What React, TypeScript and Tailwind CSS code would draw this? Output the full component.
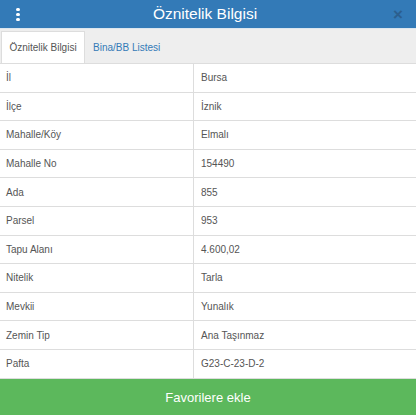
const rows: [string, string][] = [
  ["İl", "Bursa"],
  ["İlçe", "İznik"],
  ["Mahalle/Köy", "Elmalı"],
  ["Mahalle No", "154490"],
  ["Ada", "855"],
  ["Parsel", "953"],
  ["Tapu Alanı", "4.600,02"],
  ["Nitelik", "Tarla"],
  ["Mevkii", "Yunalık"],
  ["Zemin Tip", "Ana Taşınmaz"],
  ["Pafta", "G23-C-23-D-2"],
];

export default function App() {
  return (
    <div className="flex h-[415px] w-[416px] flex-col overflow-hidden bg-white font-['Liberation_Sans',Arial,sans-serif] text-[#333]">
      <header className="flex h-[28px] shrink-0 items-center bg-[#337ab7] text-white">
        <div className="flex w-[36px] flex-col items-center gap-[1.5px] pt-[1px]">
          <span className="h-[3.5px] w-[3.5px] rounded-full bg-white" />
          <span className="h-[3.5px] w-[3.5px] rounded-full bg-white" />
          <span className="h-[3.5px] w-[3.5px] rounded-full bg-white" />
        </div>
        <h1 className="flex-1 pr-[6px] text-center text-[15.5px] leading-none">Öznitelik Bilgisi</h1>
        <span className="w-[36px] text-center text-[17px] font-bold leading-none text-[#2c5f8e]">×</span>
      </header>

      <div className="flex h-[35px] shrink-0 items-end border-t border-[#dbe6ef] bg-[#eeeeee] pl-[1px]">
        <div className="flex h-[32px] w-[84px] items-center justify-center border-x border-t border-[#dddddd] bg-white text-[10px] text-[#555]">
          Öznitelik Bilgisi
        </div>
        <div className="flex h-[32px] items-center px-[8px] text-[10px] text-[#337ab7]">Bina/BB Listesi</div>
      </div>

      <div className="flex-1 border-t border-[#dddddd]">
        {rows.map(([label, value]) => (
          <div key={label} className="grid h-[28.6px] grid-cols-[194px_1fr] border-b border-[#dddddd] text-[10px] text-[#555]">
            <div className="flex items-center border-r border-[#dddddd] pl-[6px]">{label}</div>
            <div className="flex items-center pl-[7px]">{value}</div>
          </div>
        ))}
      </div>

      <button
        type="button"
        className="h-[38px] shrink-0 bg-[#5cb85c] text-center text-[13px] text-white"
      >
        Favorilere ekle
      </button>
    </div>
  );
}
